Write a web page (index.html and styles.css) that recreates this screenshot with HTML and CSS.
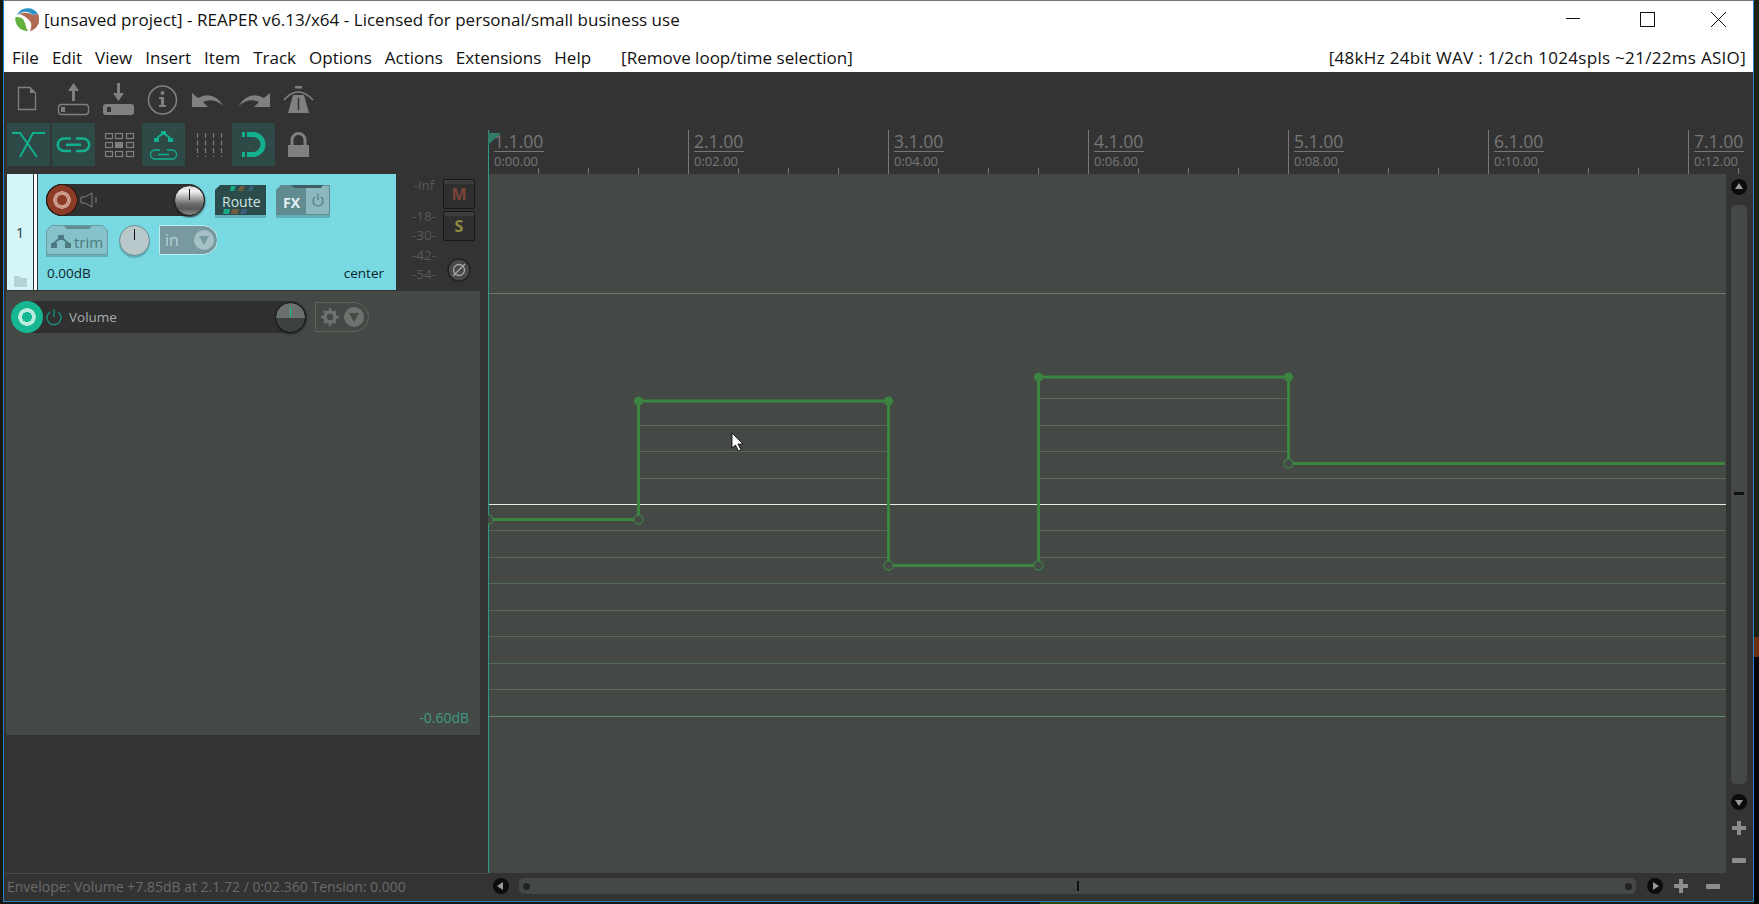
FILE: index.html
```html
<!DOCTYPE html>
<html lang="en">
<head>
<meta charset="utf-8">
<title>REAPER</title>
<link rel="stylesheet" href="styles.css">
</head>
<body>
<div class="window">
  <header class="titlebar">
    <svg class="logo" viewBox="15 7 24 24" width="24" height="24">
      <path d="M17 15 A12 12 0 0 1 38 14 L33 15 Q26 9 19 14 Z" fill="#2f93c9"/>
      <path d="M38 14 A12 12 0 0 1 30 31 Q33 24 29 20 Q24 15 19 14 Q27 11 33 15 Z" fill="#b06a52"/>
      <path d="M15.500 17 Q23 16 25 23 Q26 28 28 31 A12 12 0 0 1 15.500 17 Z" fill="#62b23c"/>
    </svg>
    <span class="title">[unsaved project] - REAPER v6.13/x64 - Licensed for personal/small business use</span>
    <svg class="winctl" viewBox="1560 0 180 31" width="180" height="31">
      <path d="M1566 18.500H1580" stroke="#111" fill="none"/>
      <rect x="1640.500" y="12.500" width="14" height="14" fill="none" stroke="#111"/>
      <path d="M1711 12L1726 27M1726 12L1711 27" stroke="#111" fill="none"/>
    </svg>
  </header>
  <nav class="menubar">
    <span>File</span><span>Edit</span><span>View</span><span>Insert</span><span>Item</span><span>Track</span><span>Options</span><span>Actions</span><span>Extensions</span><span>Help</span>
    <span class="menu-action">[Remove loop/time selection]</span>
    <span class="menu-status">[48kHz 24bit WAV : 1/2ch 1024spls ~21/22ms ASIO]</span>
  </nav>
  <main class="workspace">
    <section class="left">
      <div class="toolrow toolrow-a">
        <svg class="tool" viewBox="7 72 45 50"><path d="M18.500 87.500H30L35.500 93V109.500H18.500Z" fill="none" stroke="#808080" stroke-width="1.300"/><path d="M30 87.500V93H35.500Z" fill="#808080"/></svg>
        <svg class="tool" viewBox="52 72 45 50"><path d="M73.500 83L79 91H75V101H72V91H68Z" fill="#808080"/><rect x="58.500" y="104.500" width="30" height="10" rx="3" fill="none" stroke="#808080" stroke-width="1.300"/><rect x="61" y="107" width="4" height="5" fill="#808080"/></svg>
        <svg class="tool" viewBox="97 72 45 50"><path d="M118.500 101L113 93H117V83H120V93H124Z" fill="#808080"/><rect x="103" y="104" width="31" height="11" rx="3" fill="#808080"/><rect x="107" y="107" width="4" height="5" fill="#333"/></svg>
        <svg class="tool" viewBox="142 72 45 50"><circle cx="162.500" cy="100" r="14" fill="none" stroke="#808080" stroke-width="1.500"/><circle cx="162.500" cy="93" r="2" fill="#808080"/><path d="M159 97H164V105H166V107H159V105H161V99H159Z" fill="#808080"/></svg>
        <svg class="tool" viewBox="187 72 45 50"><path d="M192 93V107H208L203 102Q213 97 223.500 106Q213 90 198 98Z" fill="#808080"/></svg>
        <svg class="tool" viewBox="232 72 45 50"><path d="M270 93V107H254L259 102Q249 97 238.500 106Q249 90 264 98Z" fill="#808080"/></svg>
        <svg class="tool" viewBox="277 72 45 50"><rect x="295" y="86" width="7" height="2.500" fill="#808080"/><path d="M284 100Q298 84 313 100" fill="none" stroke="#808080" stroke-width="1.500"/><path d="M293 95H304L309 113H288Z" fill="#808080"/><path d="M298.500 98V110" stroke="#333" stroke-width="1.500"/></svg>
      </div>
      <div class="toolrow toolrow-b">
        <span class="tbtn on"><svg viewBox="0 0 43 43"><path d="M5 10H13L30 34M38 10H26L13 34" fill="none" stroke="#13b08f" stroke-width="2"/></svg></span>
        <span class="tbtn on"><svg viewBox="0 0 43 43"><path d="M19 15.500H12A5.500 5.500 0 0 0 12 28H19M24 15.500H31A5.500 5.500 0 0 1 31 28H24M14 21.800H29" fill="none" stroke="#13b08f" stroke-width="2.500"/></svg></span>
        <span class="tbtn"><svg viewBox="0 0 43 43"><g fill="none" stroke="#808080" stroke-width="1.200"><rect x="8.500" y="10.500" width="7" height="5"/><rect x="18.500" y="10.500" width="7" height="5"/><rect x="29.500" y="10.500" width="7" height="5"/><rect x="8.500" y="19.500" width="7" height="5"/><rect x="29.500" y="19.500" width="7" height="5"/><rect x="8.500" y="28.500" width="7" height="5"/><rect x="18.500" y="28.500" width="7" height="5"/><rect x="29.500" y="28.500" width="7" height="5"/></g><rect x="18" y="19" width="8" height="6" fill="#808080"/></svg></span>
        <span class="tbtn on"><svg viewBox="0 0 43 43"><path d="M19 8H24V12H19ZM12 15H17V19H12ZM26 15H31V19H26Z" fill="#13b08f"/><path d="M15 15L20 11M23 11L28 15" stroke="#13b08f" stroke-width="2"/><path d="M18 27H13A4.500 4.500 0 0 0 13 36H30A4.500 4.500 0 0 0 30 27H25M16 31.500H27" fill="none" stroke="#13b08f" stroke-width="1.300"/></svg></span>
        <span class="tbtn"><svg viewBox="0 0 43 43"><path d="M10.500 10V34M18.500 10V34M26.500 10V34M34.500 10V34" stroke="#777" stroke-width="1.200" stroke-dasharray="5 2.500" fill="none"/></svg></span>
        <span class="tbtn on"><svg viewBox="0 0 43 43"><path d="M10 9H13V14H10ZM10 29H13V34H10Z" fill="#13b08f"/><path d="M15 11.500H21A10 10 0 0 1 21 31.500H15" fill="none" stroke="#13b08f" stroke-width="5"/></svg></span>
        <span class="tbtn"><svg viewBox="0 0 43 43"><rect x="11" y="22" width="21" height="12" fill="#808080"/><path d="M15 23V17A6.500 6.500 0 0 1 28 17V23" fill="none" stroke="#808080" stroke-width="3"/></svg></span>
      </div>

      <div class="trackrow">
        <div class="tcp">
          <div class="tnum">
            <span class="tnum-label">1</span>
            <svg class="folder" viewBox="0 0 13 11" width="13" height="11"><path d="M0 0H5L7 2H13V11H0Z" fill="#b5d2d6"/></svg>
          </div>
          <div class="tsep"></div>
          <div class="tmain">
            <div class="tline tline-a">
              <div class="armbar">
                <span class="arm arm-red"></span>
                <svg class="spk" viewBox="0 0 18 16" width="18" height="16"><path d="M1 5H5L12 1V15L5 11H1Z" fill="none" stroke="#7c7c7c"/><path d="M16 5V11" stroke="#666" stroke-width="1.500"/></svg>
                <span class="knob knob-vol"><i class="tick"></i></span>
              </div>
              <svg class="w-route" viewBox="0 0 51 33" width="51" height="33">
                <path d="M0 8L5 3H51V33H0Z" fill="#5fb0b8"/>
                <path d="M0 5L5 0H51V30H0Z" fill="#2c4c4c"/>
                <path d="M16 1H21L19 6H15Z" fill="#16a888"/>
                <path d="M25 1H30L28 6H23Z" fill="#6f5c40"/><path d="M35 1H39L37 6H33Z" fill="#3a5f78"/>
                <path d="M9 24H15L14 29H8Z" fill="#16a888"/>
                <path d="M17 24H24L23 29H16Z" fill="#6f5c40"/><path d="M27 24H32L31 29H25Z" fill="#3a5f78"/>
                <text class="wtext" x="7" y="21.500" font-size="14" fill="#cfe4e2">Route</text>
              </svg>
              <svg class="w-fx" viewBox="0 0 54 33" width="54" height="33">
                <path d="M0 8L5 3H54V33H0Z" fill="#5fb0b8"/>
                <path d="M0 5L5 0H54V30H0Z" fill="#5f8b91"/>
                <rect x="30" y="1" width="23" height="28" fill="#8ab8be"/>
                <path d="M15 0H47L45 3H18Z" fill="#3f5e63"/>
                <text class="wtext wtext-b" x="7" y="23" font-size="14" fill="#e4f1f1">FX</text>
                <path d="M39 12A5 5 0 1 0 45 12M42 9V15" fill="none" stroke="#4f7a80" stroke-width="1.200"/>
              </svg>
            </div>
            <div class="tline tline-b">
              <svg class="w-trim" viewBox="0 0 62 32" width="62" height="32">
                <path d="M0 8L5 3H57L62 8V32H0Z" fill="#5fb0b8"/>
                <path d="M.5 5.500L5.500 .5H56.500L61.500 5.500V29.500H.5Z" fill="#85c2c9" stroke="#6a9ba1"/>
                <path d="M18 1H46L43 4H21Z" fill="#5f8b91"/>
                <path d="M6 20L15 12L24 20" fill="none" stroke="#4c7a80" stroke-width="1.800"/>
                <rect x="5" y="18" width="6" height="5" fill="#4c7a80"/><rect x="12" y="10" width="6" height="5" fill="#4c7a80"/><rect x="19" y="18" width="6" height="5" fill="#4c7a80"/>
                <text class="wtext" x="28" y="23" font-size="15" fill="#4c7a80">trim</text>
              </svg>
              <span class="knob knob-trim"><i class="tick"></i></span>
              <svg class="w-in" viewBox="0 0 58 30" width="58" height="30">
                <path d="M.5 .5H44A14 14 0 0 1 44 29.500H.5Z" fill="#78999f" stroke="#bfecef"/>
                <text class="wtext" x="6" y="21" font-size="16" fill="#b5d2d6">in</text>
                <circle cx="45" cy="15" r="10" fill="#a5c1c5"/>
                <path d="M40 11H50L45 20Z" fill="#78999f"/>
              </svg>
            </div>
            <div class="tline tline-c"><span>0.00dB</span><span>center</span></div>
          </div>
        </div>
        <div class="mcp">
          <div class="scale"><span>-inf</span><span class="s-18">-18-</span><span>-30-</span><span>-42-</span><span>-54-</span></div>
          <div class="mcp-btns">
            <span class="msbtn m">M</span>
            <span class="msbtn s">S</span>
            <svg class="phase" viewBox="0 0 24 24" width="24" height="24"><circle cx="12" cy="12" r="11" fill="#474a49" stroke="#222" stroke-width="1.500"/><circle cx="12" cy="12" r="5.500" fill="none" stroke="#a8a8a8" stroke-width="1.300"/><path d="M6 18L18 6" stroke="#a8a8a8" stroke-width="1.300"/></svg>
          </div>
        </div>
      </div>

      <div class="lane">
        <div class="lane-top">
          <div class="armbar armbar-env">
            <span class="arm arm-green"></span>
            <svg class="pwr" viewBox="0 0 16 18" width="16" height="18"><path d="M4 4A7 7 0 1 0 12 4M8 1V9" fill="none" stroke="#17917a" stroke-width="1.400"/></svg>
            <span class="env-name">Volume</span>
            <span class="knob knob-env"><i class="tick tick-env"></i></span>
          </div>
          <svg class="w-opts" viewBox="0 0 54 30" width="54" height="30">
            <path d="M.5 .5H39A14.500 14.500 0 0 1 39 29.500H.5Z" fill="none" stroke="#5e635e"/>
            <circle cx="15" cy="15" r="5" fill="none" stroke="#6e726e" stroke-width="3.500"/>
            <path d="M15 6V24M6 15H24M9 9L21 21M21 9L9 21" stroke="#6e726e" stroke-width="2.500" stroke-dasharray="3 12"/>
            <circle cx="39" cy="15" r="10" fill="#6e726e"/>
            <path d="M34 11H44L39 20Z" fill="#454a45"/>
          </svg>
        </div>
        <div class="lane-db">-0.60dB</div>
      </div>
      <div class="status">Envelope: Volume +7.85dB at 2.1.72 / 0:02.360 Tension: 0.000</div>
    </section>

    <section class="arr">
      <div class="ruler">
        <div class="bars">
          <div class="bar bar-first"><b>1.1.00</b><small>0:00.00</small></div>
          <div class="bar"><b>2.1.00</b><small>0:02.00</small></div>
          <div class="bar"><b>3.1.00</b><small>0:04.00</small></div>
          <div class="bar"><b>4.1.00</b><small>0:06.00</small></div>
          <div class="bar"><b>5.1.00</b><small>0:08.00</small></div>
          <div class="bar"><b>6.1.00</b><small>0:10.00</small></div>
          <div class="bar bar-last"><b>7.1.00</b><small>0:12.00</small></div>
        </div>
        <svg class="flag" viewBox="0 0 14 13" width="14" height="13"><path d="M0 0H13L0 12Z" fill="#2f7d69"/></svg>
      </div>
      <div class="arr-mid">
        <svg class="canvas" viewBox="488 174 1238 699" width="1238" height="699">
          <path d="M488.500 174V873" stroke="#2f9a85" fill="none"/>
          <g fill="none" stroke="#556c59" stroke-width="1">
            <path d="M489 293.500H1726" stroke="#6a7a6c"/>
            <path d="M1039 398.500H1288"/>
            <path d="M640 425.500H888M1039 425.500H1288"/>
            <path d="M640 451.500H888M1039 451.500H1288"/>
            <path d="M640 478.500H888M1039 478.500H1726"/>
            <path d="M489 530.500H888M1039 530.500H1726"/>
            <path d="M489 557.500H888M1039 557.500H1726"/>
            <path d="M489 583.500H1726M489 610.500H1726M489 636.500H1726M489 663.500H1726M489 689.500H1726"/>
            <path d="M489 716.500H1726" stroke="#668a70"/>
            <path d="M489 504.500H1726" stroke="#e6eee0"/>
          </g>
          <g fill="none" stroke="#3c8540" stroke-width="3">
            <path d="M492 519.500H634M638.500 515V401H888.500V561M892 565.500H1034M1038.500 561V377H1288.500V459M1293 463.500H1725"/>
          </g>
          <g fill="#454a45" stroke="#3c7d46" stroke-width="1.300">
            <circle cx="488.500" cy="519.500" r="4.500"/>
            <circle cx="638.500" cy="519.500" r="4.500"/>
            <circle cx="888.500" cy="565.500" r="4.500"/>
            <circle cx="1038.500" cy="565.500" r="4.500"/>
            <circle cx="1288.500" cy="463.500" r="4.500"/>
          </g>
          <g fill="#3c8540">
            <circle cx="638.500" cy="401" r="4.500"/>
            <circle cx="888.500" cy="401" r="4.500"/>
            <circle cx="1038.500" cy="377" r="4.500"/>
            <circle cx="1288.500" cy="377" r="4.500"/>
          </g>
          <path d="M732 433V448L735.500 445L738.500 451L741 450L738 444H743Z" fill="#fff" stroke="#000" stroke-width=".8"/>
        </svg>
        <div class="vscroll">
          <svg class="circ circ-up" viewBox="0 0 16 16" width="16" height="16"><circle cx="8" cy="8" r="8" fill="#0c0c0c"/><path d="M8 4L12 10H4Z" fill="#999"/></svg>
          <div class="vthumb"><i class="vmark"></i></div>
          <svg class="circ circ-down" viewBox="0 0 16 16" width="16" height="16"><circle cx="8" cy="8" r="8" fill="#0c0c0c"/><path d="M8 12L12 6H4Z" fill="#999"/></svg>
          <svg class="pm plus-v" viewBox="0 0 14 14" width="14" height="14"><path d="M5 0H9V5H14V9H9V14H5V9H0V5H5Z" fill="#8c8c8c"/></svg>
          <svg class="pm minus-v" viewBox="0 0 14 5" width="14" height="5"><rect width="14" height="5" rx="1" fill="#8c8c8c"/></svg>
        </div>
      </div>
      <div class="hscroll">
        <svg class="circ" viewBox="0 0 16 16" width="16" height="16"><circle cx="8" cy="8" r="8" fill="#0c0c0c"/><path d="M4 8L10 4V12Z" fill="#999"/></svg>
        <div class="hthumb"><i class="hdot"></i><i class="hmark"></i><i class="hdot"></i></div>
        <svg class="circ" viewBox="0 0 16 16" width="16" height="16"><circle cx="8" cy="8" r="8" fill="#0c0c0c"/><path d="M12 8L6 4V12Z" fill="#999"/></svg>
        <svg class="pm plus-h" viewBox="0 0 14 14" width="14" height="14"><path d="M5 0H9V5H14V9H9V14H5V9H0V5H5Z" fill="#8c8c8c"/></svg>
        <svg class="pm minus-h" viewBox="0 0 14 5" width="14" height="5"><rect width="14" height="5" rx="1" fill="#8c8c8c"/></svg>
      </div>
    </section>
  </main>
</div>
</body>
</html>
```

FILE: styles.css
```css
* { box-sizing: border-box; }
html, body { margin: 0; padding: 0; }
body {
  width: 1759px;
  height: 904px;
  overflow: hidden;
  font-family: "Open Sans", "Noto Sans", sans-serif;
  background:
    linear-gradient(to bottom, #1f2014 0 637px, #6a3010 637px 657px, #000 657px) right top / 5px 100% no-repeat,
    linear-gradient(#2f4a10, #2f4a10) 1040px bottom / 360px 2px no-repeat,
    #17180f;
}
.window {
  margin-left: 3px;
  width: 1751px;
  height: 902px;
  border: 1px solid #2a7fc9;
  border-top-color: #777;
  display: flex;
  flex-direction: column;
  background: #fff;
}
.titlebar {
  height: 31px;
  display: flex;
  align-items: center;
  padding: 5px 0 0 11px;
  flex: none;
}
.logo { flex: none; }
.title { margin-left: 5px; font-size: 17px; letter-spacing: .03px; color: #111; white-space: nowrap; }
.winctl { margin-left: auto; margin-right: 13px; flex: none; align-self: flex-start; margin-top: -6px; }
.menubar {
  height: 40px;
  flex: none;
  display: flex;
  align-items: center;
  gap: 13px;
  padding: 11px 7px 0 8px;
  font-size: 17px;
  color: #111;
  white-space: nowrap;
}
.menu-action { margin-left: 17px; }
.menu-status { margin-left: auto; letter-spacing: .3px; }

.workspace { flex: 1; display: flex; background: #333; min-height: 0; }

.left { width: 484px; flex: none; display: flex; flex-direction: column; }
.toolrow { display: flex; padding-left: 3px; }
.toolrow-a { height: 50px; }
.tool { width: 45px; height: 50px; flex: none; display: block; }
.toolrow-b { gap: 2px; margin-top: 1px; height: 43px; }
.tbtn { width: 43px; height: 43px; flex: none; display: block; }
.tbtn svg { display: block; width: 43px; height: 43px; }
.tbtn.on { background: #2e4a46; }

.trackrow { display: flex; margin: 8px 0 0 3px; height: 116px; flex: none; }
.tcp { width: 389px; display: flex; background: #78d9e2; }
.tnum {
  width: 26px;
  background: #d4f6f8;
  display: flex;
  flex-direction: column;
  align-items: center;
  padding-top: 48px;
}
.tnum-label { font-size: 15px; line-height: 20px; color: #24414a; }
.folder { margin-top: auto; margin-bottom: 3px; }
.tsep { width: 5px; background: #fff; border-left: 1px solid #333; border-right: 1px solid #333; }
.tmain { flex: 1; padding: 10px 12px 0 8px; display: flex; flex-direction: column; }
.tline { display: flex; align-items: flex-start; }
.tline-a { height: 41px; }
.tline-b { height: 39px; }
.tline-c { justify-content: space-between; font-size: 13.500px; line-height: 18px; color: #10262c; padding-left: 1px; }

.armbar {
  width: 159px;
  height: 32px;
  border-radius: 16px;
  background: #303030;
  display: flex;
  align-items: center;
  flex: none;
}
.arm {
  width: 32px;
  height: 32px;
  border-radius: 50%;
  flex: none;
  display: block;
}
.arm-red { background: radial-gradient(circle, #8c3b27 0 5px, #c99a8c 5px 8.500px, #8c3b27 9px 14.500px, #2a1712 15px); }
.arm-green { background: radial-gradient(circle, #17b794 0 5px, #bfeade 5px 8.500px, #17b794 9px); }
.spk { margin-left: 2px; flex: none; }
.knob {
  width: 31px;
  height: 31px;
  border-radius: 50%;
  display: flex;
  justify-content: center;
  flex: none;
  border: 1px solid #222;
}
.tick { width: 1px; height: 11px; background: #111; margin-top: 3px; display: block; }
.knob-vol {
  margin-left: auto;
  background: linear-gradient(#cfcfcf, #f4f4f4 18%, #b5b5b5 38%, #6a6a6a 62%, #585858 78%, #8a8a8a);
  box-shadow: 0 1px 2px #1a1a1a;
}
.knob-trim {
  margin: 0 9px 0 11px;
  background: #b9c9cb;
  border-color: #6a8e93;
  box-shadow: 0 2px 1px #5fb0b8;
}
.knob-env {
  margin-left: auto;
  margin-right: 1px;
  background: linear-gradient(#6a716d 0 50%, #4c6f68 50% 52%, #3d423f 52%);
  border-color: #161616;
  box-shadow: 0 1px 2px #222;
}
.tick-env { background: #17c0a0; height: 10px; margin-top: 4px; }
.w-route { margin-left: 10px; flex: none; display: block; margin-top: 1px; }
.w-fx { margin-left: 10px; flex: none; display: block; margin-top: 1px; }
.w-trim, .w-in { flex: none; display: block; }
.wtext { font-family: "Open Sans", "Noto Sans", sans-serif; }
.wtext-b { font-weight: 700; }

.mcp { width: 84px; display: flex; padding-left: 9px; }
.scale {
  width: 38px;
  display: flex;
  flex-direction: column;
  font-size: 13.500px;
  line-height: 19.500px;
  height: 116px;
  color: #595959;
  align-items: center;
  padding-top: 2px;
  flex: none;
}
.scale .s-18 { margin-top: 11px; }
.mcp-btns { display: flex; flex-direction: column; align-items: center; width: 32px; padding-top: 5px; flex: none; }
.msbtn {
  width: 32px;
  height: 30px;
  background: linear-gradient(#3d3d3d 0 4px, #2f2f2f 4px);
  border: 1px solid #171717;
  border-radius: 2px;
  display: flex;
  align-items: center;
  justify-content: center;
  font-weight: 700;
  font-size: 16px;
  margin-bottom: 2px;
}
.msbtn.m { color: #7b4437; }
.msbtn.s { color: #8e8a40; }
.phase { margin-top: 15px; flex: none; }

.lane {
  margin: 1px 0 0 2px;
  width: 474px;
  height: 444px;
  flex: none;
  background: #444945;
  display: flex;
  flex-direction: column;
  padding: 10px 0 0 5px;
}
.lane-top { display: flex; align-items: center; }
.armbar-env { width: 296px; height: 32px; }
.pwr { margin-left: 3px; flex: none; }
.env-name { margin-left: 7px; font-size: 13.500px; color: #a6adb0; }
.w-opts { margin-left: 8px; flex: none; display: block; }
.lane-db {
  margin-top: auto;
  align-self: flex-end;
  font-size: 14px;
  color: #3f9a85;
  line-height: 20px;
  padding: 0 11px 7px 0;
}
.status {
  margin: auto 0 0 2px;
  border-top: 1px solid #4a4a4a;
  height: 28px;
  padding: 3px 0 0 1px;
  font-size: 14px;
  line-height: 20px;
  color: #6a6a6a;
  white-space: nowrap;
}

.arr { flex: 1; min-width: 0; display: flex; flex-direction: column; position: relative; }
.ruler {
  height: 102px;
  flex: none;
  padding-top: 58px;
  background: repeating-linear-gradient(to right, #777 0 1px, transparent 1px 50px) left bottom / 100% 6px no-repeat;
  position: relative;
}
.bars { display: flex; height: 44px; }
.bar {
  width: 200px;
  flex: none;
  border-left: 1px solid #777;
  padding: 1px 0 0 5px;
  display: flex;
  flex-direction: column;
  align-items: flex-start;
  color: #777;
}
.bar-last { width: 64px; }
.bar-first { border-left-color: #2f9a85; }
.bar b {
  font-weight: 400;
  font-size: 17.500px;
  line-height: 20px;
  border-bottom: 1px solid #777;
  padding-right: 1px;
}
.bar small { font-size: 13px; line-height: 19px; }
.flag { position: absolute; left: 0; top: 61px; }
.arr-mid { display: flex; height: 699px; flex: none; }
.canvas { display: block; flex: none; background: #444945; }
.vscroll {
  width: 26px;
  flex: none;
  display: flex;
  flex-direction: column;
  align-items: center;
  padding: 5px 5px 0 5px;
}
.circ { flex: none; display: block; }
.vthumb {
  width: 16px;
  height: 579px;
  flex: none;
  margin-top: 10px;
  background: #444945;
  border-radius: 5px;
  padding-top: 287px;
  display: flex;
  flex-direction: column;
  align-items: center;
}
.vmark { width: 10px; height: 3px; background: #111; display: block; }
.circ-down { margin-top: 10px; }
.pm { flex: none; display: block; }
.plus-v { margin-top: 11px; }
.minus-v { margin-top: 23px; }
.hscroll { height: 28px; display: flex; align-items: center; padding-left: 5px; margin-top: -1px; }
.hthumb {
  width: 1117px;
  height: 16px;
  flex: none;
  margin: 0 11px 0 10px;
  background: #444945;
  border-radius: 5px;
  display: flex;
  align-items: center;
  justify-content: space-between;
  padding: 0 4px;
}
.hdot { width: 7px; height: 7px; border-radius: 50%; background: #222; display: block; }
.hmark { width: 2px; height: 10px; background: #111; display: block; }
.plus-h { margin-left: 11px; }
.minus-h { margin-left: 18px; }
```
